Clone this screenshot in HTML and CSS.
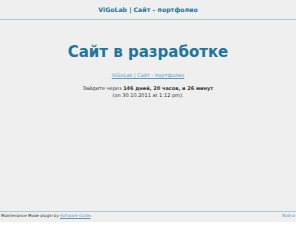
FILE: index.html
```html
<!DOCTYPE html>
<html lang="ru">
<head>
<meta charset="utf-8">
<title>ViGoLab | Сайт – портфолио</title>
<link rel="stylesheet" href="styles.css">
</head>
<body>
<div class="page">
  <header class="site-header">
    <a class="site-title" href="#">ViGoLab | Сайт – портфолио</a>
  </header>
  <main class="content">
    <h1 class="headline">Сайт в разработке</h1>
    <p class="site-link"><a href="#">ViGoLab | Сайт - портфолио</a></p>
    <p class="countdown">Зайдите через <strong>146 дней, 20 часов, и 26 минут</strong><br>(on 30.10.2011 at 1:12 pm).</p>
  </main>
  <footer class="site-footer">
    <span>Maintenance Mode plugin by <a href="#">Software Guide</a>.</span>
    <a class="login" href="#">Войти</a>
  </footer>
</div>
</body>
</html>
```
FILE: styles.css
```css
html, body {
  margin: 0;
  padding: 0;
  background: #ffffff;
}
body {
  font-family: "DejaVu Sans", Verdana, sans-serif;
  color: #333333;
}
.page {
  background: #efefef;
  display: flex;
  flex-direction: column;
}
.site-header {
  height: 19px;
  border-bottom: 1px solid #a8cbdc;
  display: flex;
  align-items: center;
  justify-content: center;
}
.site-title {
  font-size: 6.2px;
  font-weight: bold;
  color: #21759b;
  text-decoration: none;
}
.content {
  height: 191px;
  display: flex;
  flex-direction: column;
  align-items: center;
  text-align: center;
}
.headline {
  margin: 22px 0 0 0;
  font-size: 15px;
  line-height: 20px;
  font-weight: bold;
  color: #21759b;
}
.site-link {
  margin: 10px 0 0 0;
  font-size: 5px;
  line-height: 7px;
}
.site-link a {
  color: #5b9ac0;
}
.countdown {
  margin: 6px 0 0 0;
  font-size: 5px;
  line-height: 7px;
  color: #333333;
}
.site-footer {
  height: 11px;
  border-top: 1px solid #a8cbdc;
  display: flex;
  justify-content: space-between;
  align-items: flex-start;
  padding: 1px 1px 0 1px;
  box-sizing: border-box;
  font-size: 4px;
  line-height: 6px;
  color: #333333;
}
.site-footer a {
  color: #5b9ac0;
}
.login {
  text-decoration: none;
}
```
